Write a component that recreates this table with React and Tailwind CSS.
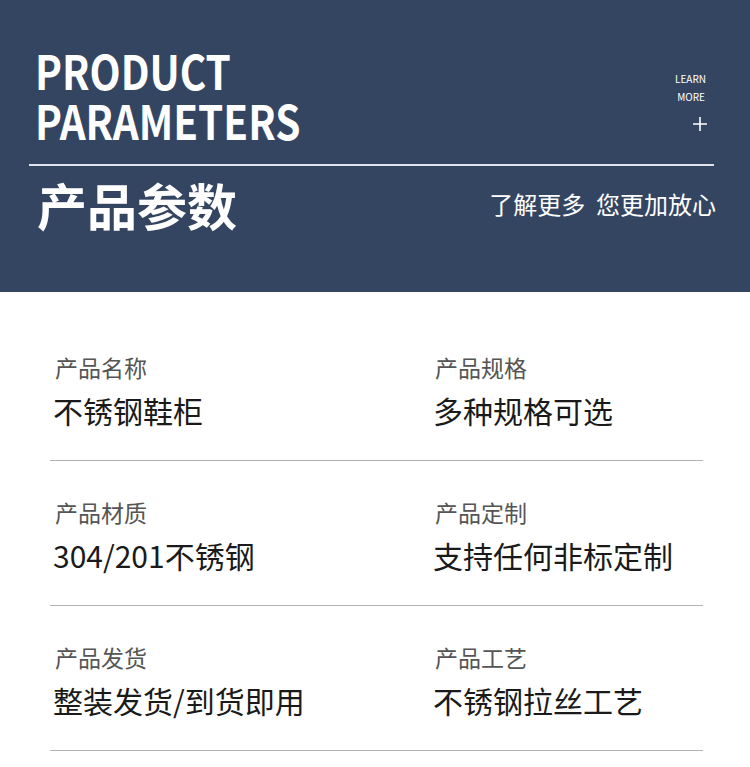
import React from 'react';

const params = [
  { label: '产品名称', value: '不锈钢鞋柜' },
  { label: '产品规格', value: '多种规格可选' },
  { label: '产品材质', value: '304/201不锈钢' },
  { label: '产品定制', value: '支持任何非标定制' },
  { label: '产品发货', value: '整装发货/到货即用' },
  { label: '产品工艺', value: '不锈钢拉丝工艺' },
];

const font = { fontFamily: '"Noto Sans CJK SC", "Noto Sans", sans-serif' };

const App = () => {
  const rows = [];
  for (let i = 0; i < params.length; i += 2) rows.push([params[i], params[i + 1]]);

  return (
    <div className="w-[750px] bg-white" style={font}>
      {/* header */}
      <div className="h-[292px] bg-[#344562] text-white">
        <div className="flex justify-between pl-[35px] pr-[44px] pt-[46px]">
          <h1 className="flex origin-left scale-x-[0.86] flex-col gap-[3px] text-[47px] font-bold leading-none">
            <span>PRODUCT</span>
            <span>PARAMETERS</span>
          </h1>
          <div className="flex flex-col items-end pt-[24px] text-[10px] leading-[18px]">
            <span>LEARN</span>
            <span className="pr-[1px]">MORE</span>
            <svg className="mt-[11px] mr-[-1px]" width="14" height="14" viewBox="0 0 14 14">
              <path d="M7 0v14M0 7h14" stroke="#fff" strokeWidth="1.6" />
            </svg>
          </div>
        </div>
        <div className="mx-[29px] mt-[21px] mr-[36px] h-[2px] bg-[#dfe2e8]" />
        <div className="flex items-center justify-between pl-[37px] pr-[34px] pt-[10px]">
          <h2 className="text-[50px] font-bold leading-[56px]">产品参数</h2>
          <span className="text-[24px] leading-[30px]">了解更多&nbsp;&nbsp;您更加放心</span>
        </div>
      </div>

      {/* params */}
      <div className="mx-[50px] mr-[47px] pt-[24px]">
        {rows.map((pair, i) => (
          <div key={i} className="grid grid-cols-[380px_1fr] border-b border-[#b3b3b3] pt-[40px] pb-[35px]">
            {pair.map((p, j) => (
              <div key={j} className="flex flex-col">
                <span className="pl-[5px] text-[23px] leading-[23px] text-[#555]">{p.label}</span>
                <span className="mt-[16px] pl-[3px] text-[30px] leading-[30px] text-[#1a1a1a]">{p.value}</span>
              </div>
            ))}
          </div>
        ))}
      </div>
    </div>
  );
};

export default App;
